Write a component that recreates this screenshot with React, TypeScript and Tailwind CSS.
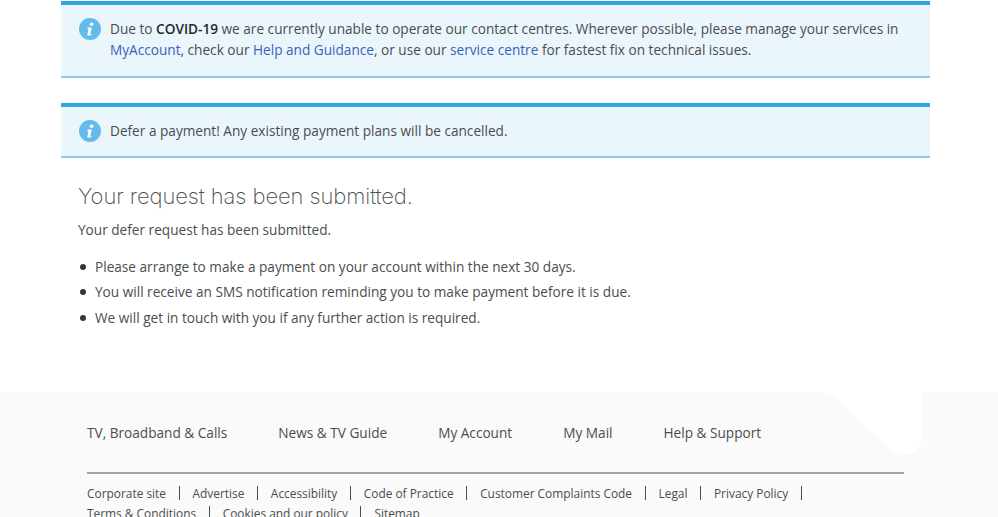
const font = { fontFamily: '"Open Sans", sans-serif' };

function InfoIcon() {
  return (
    <svg width="22" height="22" viewBox="0 0 22 22" className="shrink-0">
      <circle cx="11" cy="11" r="11" fill="#63bbec" />
      <circle cx="12.6" cy="6.2" r="1.8" fill="#fff" />
      <path d="M8.6 9.6h4.2l-1.5 6.2c-.1.5.3.6 1.5.1l-.2.9c-1.1.6-2 .9-2.9.9-1 0-1.5-.6-1.3-1.6l1.1-4.9-1.1-.3z" fill="#fff" />
    </svg>
  );
}

const mainLinks = [
  "TV, Broadband & Calls",
  "News & TV Guide",
  "My Account",
  "My Mail",
  "Help & Support",
];

const legalLinks = [
  "Corporate site",
  "Advertise",
  "Accessibility",
  "Code of Practice",
  "Customer Complaints Code",
  "Legal",
  "Privacy Policy",
  "Terms & Conditions",
  "Cookies and our policy",
  "Sitemap",
];

const bullets = [
  "Please arrange to make a payment on your account within the next 30 days.",
  "You will receive an SMS notification reminding you to make payment before it is due.",
  "We will get in touch with you if any further action is required.",
];

export default function App() {
  return (
    <div className="h-[517px] overflow-hidden bg-white text-[#4a4d4e] text-[13.63px]" style={font}>
      <div className="mx-[61px] w-[869px] pt-px">
        {/* Alerts */}
        <div className="border-t-4 border-b-2 border-t-[#2fa6e4] border-b-[#8ccbee] bg-[#eaf5fc] h-[77px] flex gap-[9px] pl-[18px] pt-[13px] pr-[20px]">
          <InfoIcon />
          <p className="leading-[20.5px] mt-[1px]">
            Due to <b className="font-semibold text-[#25282a]">COVID-19</b> we are currently unable to operate our contact centres. Wherever possible, please manage your services in{" "}
            <a className="text-[#3a62b8]">MyAccount</a>, check our <a className="text-[#3a62b8]">Help and Guidance</a>, or use our <a className="text-[#3a62b8]">service centre</a> for fastest fix on technical issues.
          </p>
        </div>

        <div className="mt-[25px] border-t-4 border-b-2 border-t-[#2fa6e4] border-b-[#8ccbee] bg-[#eaf5fc] h-[55px] flex items-center gap-[9px] pl-[18px] pb-[1px]">
          <InfoIcon />
          <p>Defer a payment! Any existing payment plans will be cancelled.</p>
        </div>

        {/* Confirmation */}
        <div className="pl-[17px]">
          <h1 className="mt-[21px] text-[22px] leading-[34px] font-extralight tracking-[-0.08px] text-[#4a4d4e]" style={{ fontFamily: "Inter, sans-serif" }}>
            Your request has been submitted.
          </h1>
          <p className="mt-[4px] leading-[25px]">Your defer request has been submitted.</p>
          <ul className="mt-[12px]">
            {bullets.map((b) => (
              <li key={b} className="flex items-center h-[25.5px]">
                <span className="w-[6px] h-[6px] rounded-full bg-[#33373a] ml-[2px] mr-[9px]" />
                {b}
              </li>
            ))}
          </ul>
        </div>
      </div>

      {/* Footer */}
      <footer className="relative mt-[61px] bg-[#fafafa] h-[140px] px-[87px]">
        <svg className="absolute left-[810px] top-0" width="112" height="64" viewBox="0 0 112 64">
          <path d="M0 0H112V46C112 60 95 68 80 57C72 51 50 28 30 9C24 3 18 0 8 0Z" fill="#fff" />
        </svg>
        <nav className="relative flex gap-[51px] pt-[31px] h-[82px] w-[817px] border-b-2 border-b-[#a3a5a6] leading-[20px]">
          {mainLinks.map((l) => (
            <a key={l}>{l}</a>
          ))}
        </nav>
        <div className="relative flex flex-wrap w-[817px] text-[11.9px] leading-[14px] mt-[12px] gap-y-[6px]">
          {legalLinks.map((l, i) => (
            <a key={l} className={`border-r border-r-[#4a4d4e] pr-[12.5px] mr-[13px] ${i === legalLinks.length - 1 ? "border-r-0" : ""}`}>
              {l}
            </a>
          ))}
        </div>
      </footer>
    </div>
  );
}
